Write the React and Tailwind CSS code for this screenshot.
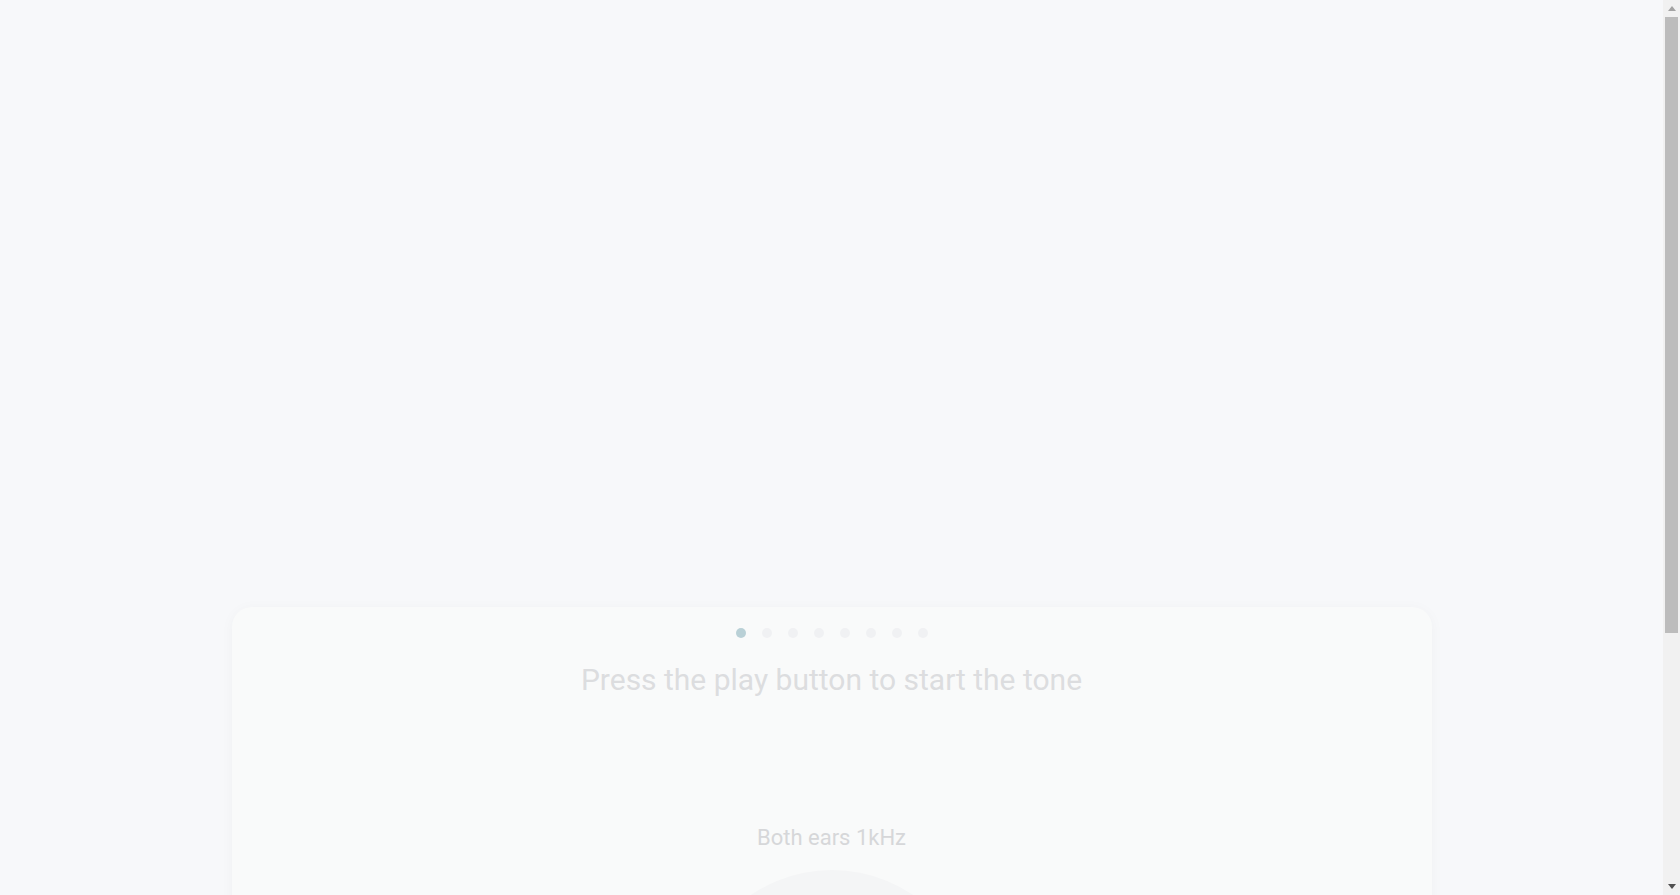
import { Play } from 'lucide-react';

const STEPS = 8;

function StepDots({ active }) {
  return (
    <div className="flex items-center justify-center gap-4">
      {Array.from({ length: STEPS }).map((_, i) => (
        <span
          key={i}
          className={i === active ? 'h-[10px] w-[10px] rounded-full bg-[#b9d0d6]' : 'h-[10px] w-[10px] rounded-full bg-[#f0f1f3]'}
        />
      ))}
    </div>
  );
}

// the page scrollbar, as the browser drew it
function ScrollRail() {
  return (
    <div className="flex w-[17px] shrink-0 flex-col bg-[#f1f1f1]">
      <div className="grid h-[17px] place-items-center">
        <svg width="8" height="5" viewBox="0 0 8 5">
          <path d="M0 5 L4 0 L8 5 Z" fill="#a3a3a3" />
        </svg>
      </div>
      <div className="mx-[2px] h-[616px] bg-[#bcbcbc]" />
      <div className="flex-1" />
      <div className="grid h-[17px] place-items-center">
        <svg width="8" height="5" viewBox="0 0 8 5">
          <path d="M0 0 L8 0 L4 5 Z" fill="#505050" />
        </svg>
      </div>
    </div>
  );
}

export default function App() {
  return (
    <div className="flex h-screen overflow-hidden bg-[#f7f8fa] font-['Roboto','Liberation_Sans',sans-serif]">
      <div className="min-w-0 flex-1">
        {/* empty stage above the test card */}
        <div className="h-[607px]" />
        <main className="mx-auto max-w-[1200px] pb-6">
          <section className="flex h-[620px] flex-col items-center rounded-[20px] bg-[#f9fafa] px-8 pt-[21px] shadow-[0_2px_14px_rgba(15,23,42,0.035)]">
            <StepDots active={0} />
            <h1 className="mt-[22px] text-[30px] leading-[40px] font-normal text-[#dcdddf]">Press the play button to start the tone</h1>
            <p className="mt-[124px] text-[22px] leading-[28px] text-[#d6d7d9]">Both ears 1kHz</p>
            <button
              type="button"
              aria-label="Play tone"
              className="mt-[18px] grid h-72 w-72 place-items-center rounded-full bg-[#f4f5f6] text-[#e8e9eb]"
            >
              <Play size={64} />
            </button>
          </section>
        </main>
      </div>
      <ScrollRail />
    </div>
  );
}
